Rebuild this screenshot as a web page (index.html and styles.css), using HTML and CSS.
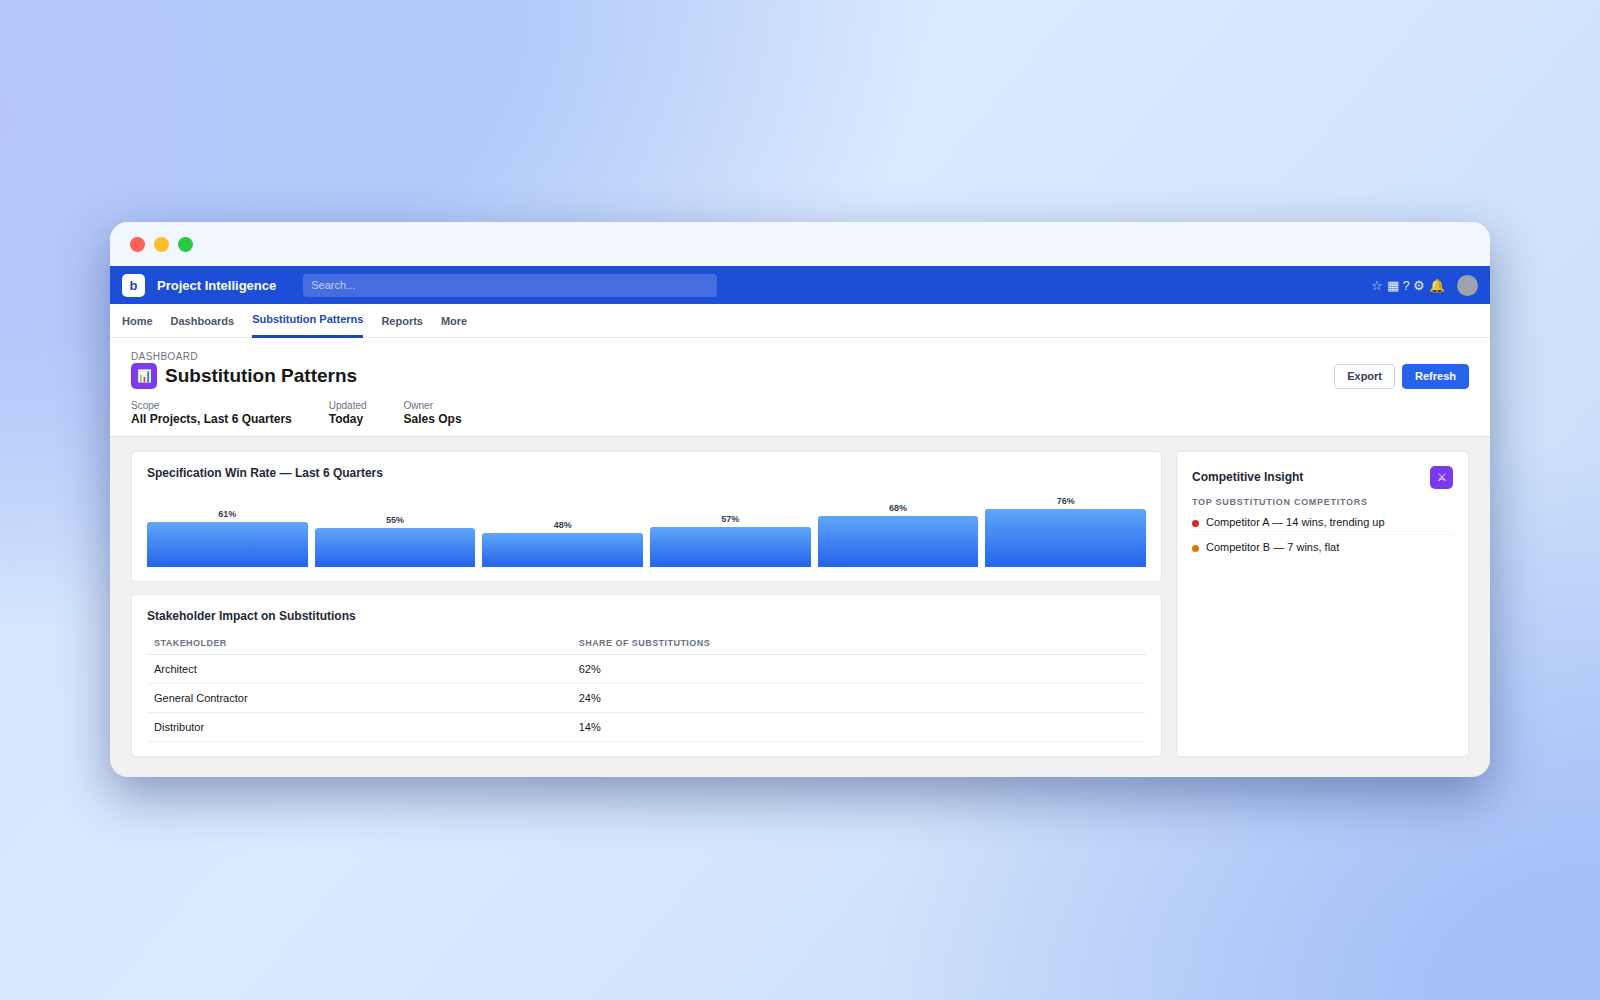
FILE: index.html
```
<!DOCTYPE html>
<html lang="en">
<head>
    <meta charset="UTF-8">
    <meta name="viewport" content="width=device-width, initial-scale=1.0">
    <title>Substitution Patterns - Project Intelligence</title>
    <link rel="stylesheet" href="styles.css">
</head>
<body>
    <div class="window">
        <div class="titlebar">
            <span class="light red"></span>
            <span class="light yellow"></span>
            <span class="light green"></span>
        </div>

        <header class="topbar">
            <div class="logo">b</div>
            <div class="brand">Project Intelligence</div>
            <input class="search" type="text" placeholder="Search..." aria-label="Search">
            <div class="top-icons">☆ ▦ ? ⚙ 🔔</div>
            <div class="avatar"></div>
        </header>

        <nav class="nav">
            <a href="#">Home</a>
            <a href="#">Dashboards</a>
            <a href="#" class="active">Substitution Patterns</a>
            <a href="#">Reports</a>
            <a href="#">More</a>
        </nav>

        <section class="page-header">
            <div class="eyebrow">DASHBOARD</div>
            <div class="title-row">
                <div class="page-icon">📊</div>
                <h1>Substitution Patterns</h1>
                <div class="actions">
                    <button class="btn">Export</button>
                    <button class="btn primary">Refresh</button>
                </div>
            </div>
            <dl class="meta">
                <div><dt>Scope</dt><dd>All Projects, Last 6 Quarters</dd></div>
                <div><dt>Updated</dt><dd>Today</dd></div>
                <div><dt>Owner</dt><dd>Sales Ops</dd></div>
            </dl>
        </section>

        <main class="content">
            <div class="left">
                <section class="card">
                    <h2>Specification Win Rate — Last 6 Quarters</h2>
                    <div class="chart">
                        <div class="col"><span>61%</span><div class="bar" style="height: 45px"></div></div>
                        <div class="col"><span>55%</span><div class="bar" style="height: 39px"></div></div>
                        <div class="col"><span>48%</span><div class="bar" style="height: 34px"></div></div>
                        <div class="col"><span>57%</span><div class="bar" style="height: 40px"></div></div>
                        <div class="col"><span>68%</span><div class="bar" style="height: 51px"></div></div>
                        <div class="col"><span>76%</span><div class="bar" style="height: 58px"></div></div>
                    </div>
                </section>

                <section class="card">
                    <h2>Stakeholder Impact on Substitutions</h2>
                    <table>
                        <thead>
                            <tr><th>STAKEHOLDER</th><th>SHARE OF SUBSTITUTIONS</th></tr>
                        </thead>
                        <tbody>
                            <tr><td>Architect</td><td>62%</td></tr>
                            <tr><td>General Contractor</td><td>24%</td></tr>
                            <tr><td>Distributor</td><td>14%</td></tr>
                        </tbody>
                    </table>
                </section>
            </div>

            <aside class="card">
                <div class="insight-head">
                    <h2>Competitive Insight</h2>
                    <div class="insight-icon">⚔</div>
                </div>
                <h3>TOP SUBSTITUTION COMPETITORS</h3>
                <ul class="competitors">
                    <li><span class="dot high"></span>Competitor A — 14 wins, trending up</li>
                    <li><span class="dot medium"></span>Competitor B — 7 wins, flat</li>
                </ul>
            </aside>
        </main>
    </div>
</body>
</html>
```
FILE: styles.css
```
* {
    box-sizing: border-box;
}
body {
    margin: 0;
    min-height: 100vh;
    padding-bottom: 1px;
    display: flex;
    justify-content: center;
    align-items: center;
    font-family: "Liberation Sans", Arial, sans-serif;
    font-size: 11px;
    color: #181818;
    background:
        radial-gradient(ellipse 22% 50% at 0% 12%, #b6c6fb 0%, rgba(182, 198, 251, 0) 100%),
        radial-gradient(ellipse 52% 64% at 6% 0%, #b1caf9 50%, rgba(177, 202, 249, 0) 100%),
        radial-gradient(ellipse 46% 56% at 100% 100%, #a5bff7 20%, rgba(165, 191, 247, 0) 100%),
        linear-gradient(130deg, #d0e2fa 0%, #dce9fe 42%, #cfe2fa 72%, #c4d8fa 100%);
}
h1, h2, h3, dl, dd, ul {
    margin: 0;
    padding: 0;
}
.window {
    width: calc(100% - 220px);
    border-radius: 18px;
    overflow: hidden;
    background: #f1f1f1;
    box-shadow: 0 18px 50px rgba(30, 50, 110, 0.45);
}

/* window chrome */
.titlebar {
    height: 44px;
    padding: 0 20px;
    display: flex;
    align-items: center;
    gap: 9px;
    background: #f2f6fe;
}
.light {
    width: 15px;
    height: 15px;
    border-radius: 50%;
}
.red {
    background: #ff5f57;
}
.yellow {
    background: #febc2e;
}
.green {
    background: #28c840;
}

/* top bar */
.topbar {
    height: 38px;
    padding: 0 12px;
    display: flex;
    align-items: center;
    gap: 12px;
    background: #1d4ed8;
    color: white;
}
.logo {
    width: 23px;
    height: 23px;
    border-radius: 5px;
    background: white;
    color: #1e48b8;
    font-size: 13px;
    font-weight: bold;
    line-height: 23px;
    text-align: center;
}
.brand {
    font-size: 13px;
    font-weight: bold;
}
.search {
    flex: 1;
    max-width: 414px;
    height: 23px;
    margin-left: 15px;
    padding: 0 8px;
    border: none;
    border-radius: 4px;
    background: rgba(255, 255, 255, 0.18);
    color: white;
    font-family: inherit;
    font-size: 11px;
}
.search::placeholder {
    color: rgba(255, 255, 255, 0.7);
}
.top-icons {
    margin-left: auto;
    font-size: 13px;
    color: rgba(255, 255, 255, 0.9);
}
.avatar {
    width: 21px;
    height: 21px;
    border-radius: 50%;
    background: #9ca3af;
}

/* tabs */
.nav {
    height: 34px;
    padding: 0 12px;
    display: flex;
    gap: 18px;
    background: white;
    border-bottom: 1px solid #e5e7eb;
}
.nav a {
    height: 34px;
    line-height: 34px;
    color: #4b5563;
    font-weight: bold;
    text-decoration: none;
}
.nav .active {
    line-height: 31px;
    color: #1e48b8;
    border-bottom: 3px solid #1e48b8;
}

/* page header */
.page-header {
    padding: 12px 21px 10px;
    background: white;
    border-bottom: 1px solid #e0e0e0;
}
.eyebrow {
    font-size: 10px;
    line-height: 13px;
    letter-spacing: 0.04em;
    color: #6b7280;
}
.title-row {
    display: flex;
    align-items: center;
    gap: 8px;
}
.page-icon {
    width: 26px;
    height: 26px;
    border-radius: 5px;
    background: #7c3aed;
    font-size: 12px;
    line-height: 26px;
    text-align: center;
}
h1 {
    font-size: 19px;
}
.actions {
    display: flex;
    gap: 7px;
    margin-left: auto;
}
.btn {
    height: 25px;
    padding: 0 12px;
    border: 1px solid #d1d5db;
    border-radius: 4px;
    background: white;
    color: #374151;
    font-family: inherit;
    font-size: 11px;
    font-weight: bold;
    cursor: pointer;
}
.primary {
    background: #2563eb;
    border-color: #2563eb;
    color: white;
}
.meta {
    display: flex;
    gap: 37px;
    margin-top: 11px;
}
dt {
    font-size: 10px;
    line-height: 12px;
    color: #6b7280;
}
dd {
    font-size: 12px;
    font-weight: bold;
    line-height: 14px;
}

/* dashboard */
.content {
    display: grid;
    grid-template-columns: 1fr 293px;
    gap: 14px;
    padding: 14px 21px 20px;
}
.left {
    display: grid;
    gap: 12px;
}
.card {
    padding: 14px 15px;
    background: white;
    border: 1px solid #e8e8ea;
    border-radius: 4px;
}
h2 {
    font-size: 12px;
    line-height: 15px;
    color: #1f2937;
}
.chart {
    display: flex;
    align-items: flex-end;
    gap: 7px;
    height: 80px;
    margin-top: 6px;
}
.col {
    flex: 1;
    font-size: 9px;
    font-weight: bold;
    line-height: 11px;
    text-align: center;
    color: #374151;
}
.bar {
    margin-top: 2px;
    border-radius: 3px 3px 0 0;
    background: linear-gradient(#60a5fa, #2563eb);
}
table {
    width: 100%;
    margin-top: 9px;
    border-collapse: separate;
    border-spacing: 0;
}
th {
    padding: 5px 7px;
    border-bottom: 1px solid #e5e7eb;
    color: #6b7280;
    font-size: 9px;
    line-height: 11px;
    letter-spacing: 0.05em;
    text-align: left;
}
td {
    padding: 8px 7px;
    border-bottom: 1px solid #f0f0f0;
    line-height: 12px;
}

/* competitive insight */
.insight-head {
    display: flex;
    justify-content: space-between;
    align-items: center;
}
.insight-icon {
    width: 23px;
    height: 23px;
    border-radius: 5px;
    background: #7c3aed;
    color: white;
    line-height: 23px;
    text-align: center;
}
h3 {
    margin-top: 7px;
    color: #6b7280;
    font-size: 9px;
    line-height: 13px;
    letter-spacing: 0.08em;
}
.competitors {
    margin-top: 1px;
    list-style: none;
}
.competitors li {
    display: flex;
    gap: 7px;
    padding: 6px 0;
    border-bottom: 1px solid #f6f6f6;
    line-height: 12px;
}
.competitors li:last-child {
    border-bottom: none;
}
.dot {
    width: 7px;
    height: 7px;
    margin-top: 4px;
    border-radius: 50%;
}
.high {
    background: #dc2626;
}
.medium {
    background: #d97706;
}
```
